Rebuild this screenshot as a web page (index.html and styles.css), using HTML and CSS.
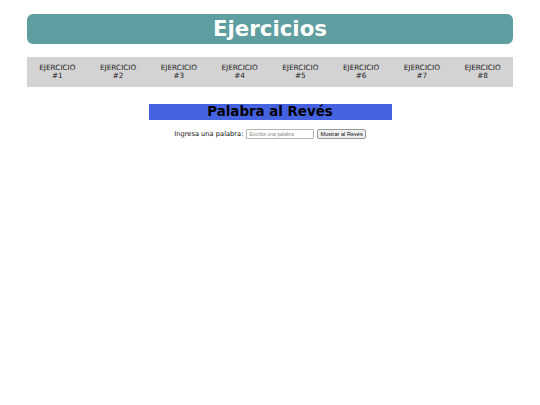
FILE: index.html
```html
<!DOCTYPE html>
<html lang="es">
<head>
    <meta charset="UTF-8">
    <meta name="viewport" content="width=device-width, initial-scale=1.0">
    <title>Ejercicios</title>
    <link rel="stylesheet" href="styles.css">
</head>
<body>
    <div class="contenedor">
        <!-- Encabezado -->
        <header class="encabezado">
            <h1>Ejercicios</h1>
        </header>

        <!-- Menu de ejercicios -->
        <nav class="menu">
            <a href="#" class="menu-item">Ejercicio<br>#1</a>
            <a href="#" class="menu-item">Ejercicio<br>#2</a>
            <a href="#" class="menu-item">Ejercicio<br>#3</a>
            <a href="#" class="menu-item">Ejercicio<br>#4</a>
            <a href="#" class="menu-item">Ejercicio<br>#5</a>
            <a href="#" class="menu-item">Ejercicio<br>#6</a>
            <a href="#" class="menu-item">Ejercicio<br>#7</a>
            <a href="#" class="menu-item">Ejercicio<br>#8</a>
        </nav>

        <!-- Palabra al reves -->
        <section class="ejercicio">
            <h2>Palabra al Revés</h2>
            <div class="fila">
                <label for="palabra">Ingresa una palabra:</label>
                <input type="text" id="palabra" placeholder="Escribe una palabra">
                <button type="button" class="btn" onclick="alReves()">Mostrar al Revés</button>
            </div>
            <p id="resultado" class="resultado"></p>
        </section>
    </div>

    <script>
        function alReves() {
            const palabra = document.getElementById('palabra').value;
            document.getElementById('resultado').textContent = palabra.split('').reverse().join('');
        }
    </script>
</body>
</html>
```

FILE: styles.css
```css
/* Estilos generales */
body {
    font-family: "DejaVu Sans", Verdana, sans-serif;
    margin: 0;
    padding: 0;
    background-color: #fff;
    color: #111;
}

.contenedor {
    width: 90%;
    margin: 0 auto;
}

.encabezado {
    margin-top: 14px;
    height: 30px;
    background-color: #5f9ea0;
    border-radius: 6px;
}

.encabezado h1 {
    margin: 0;
    text-align: center;
    color: white;
    font-size: 21.3px;
    line-height: 30px;
}

.menu {
    display: flex;
    margin-top: 13px;
    height: 30px;
    align-items: center;
    background-color: #d3d3d3;
}

.menu-item {
    flex: 1;
    text-align: center;
    text-transform: uppercase;
    text-decoration: none;
    color: #222;
    font-size: 7.3px;
    line-height: 8.4px;
}

.ejercicio {
    text-align: center;
}

.ejercicio h2 {
    width: 50%;
    margin: 17px auto 0;
    background-color: #4563e0;
    font-size: 13.4px;
    line-height: 16px;
    color: #000;
}

.fila {
    margin-top: 9px;
    font-size: 6.7px;
    display: flex;
    justify-content: center;
    align-items: center;
    gap: 3px;
}

.fila input {
    width: 62px;
    height: 8px;
    padding: 0 2px;
    box-sizing: content-box;
    border: 1px solid #b5b5b5;
    border-radius: 1px;
    font-family: "Liberation Sans", Arial, sans-serif;
    font-size: 5px;
}

.fila input::placeholder {
    color: #8a8a8a;
}

.btn {
    height: 10px;
    padding: 0 2px;
    border: 1px solid #9a9a9a;
    border-radius: 2px;
    background-color: #efefef;
    font-family: "Liberation Sans", Arial, sans-serif;
    font-size: 5.6px;
    line-height: 8px;
    color: #111;
    cursor: pointer;
}

.resultado {
    font-size: 6.7px;
}
```
